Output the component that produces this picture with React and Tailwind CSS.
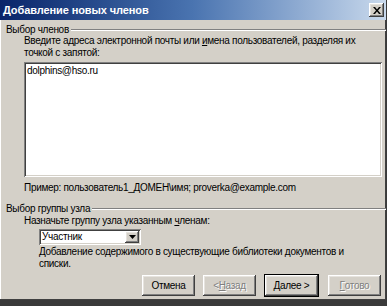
/*
 * wizard dialog - add new members to a site (classic windows look)
 */
const raised = 'shadow-[inset_-1px_-1px_#404040,inset_1px_1px_#ffffff,inset_-2px_-2px_#808080,inset_2px_2px_#e6e3de]';
const sunken = 'shadow-[inset_1px_1px_#808080,inset_-1px_-1px_#ffffff,inset_2px_2px_#404040,inset_-2px_-2px_#d4d0c8]';

function GroupHeader({ children }) {
  return (
    <div className="flex items-center h-[13px] pl-[6px]">
      <span className="whitespace-nowrap pr-[2px]">{children}</span>
      <div className="flex-1 border-t border-[#808080] border-b border-b-white mt-[1px]" />
    </div>
  );
}

function Button({ children, primary, disabled }) {
  return (
    <button
      type="button"
      className={`w-[53px] h-[21px] flex items-center justify-center bg-[#d4d0c8] ${raised} ${
        primary ? 'outline outline-1 outline-black' : ''
      } ${disabled ? 'text-[#808080] [text-shadow:1px_1px_#ffffff]' : 'text-black'}`}
    >
      {children}
    </button>
  );
}

export default function App() {
  return (
    <div className="w-[387px] h-[306px] bg-[#3a3a3a] text-[10px] tracking-[-0.3px] text-black font-['Liberation_Sans',Arial,sans-serif] overflow-hidden">
      <div className="w-[386px] h-[300px] bg-[#d4d0c8] flex flex-col shadow-[inset_-1px_-1px_#404040,inset_1px_1px_#ffffff]">
        {/* title bar */}
        <div className="h-[20px] flex items-center justify-between pl-[3px] pr-[2px] bg-gradient-to-r from-[#0a246a] via-[#4a74b0] to-[#c9d9ec]">
          <span className="text-white font-bold text-[11px] tracking-[-0.1px]">Добавление новых членов</span>
          <div className={`w-[15px] h-[14px] flex items-center justify-center bg-[#d4d0c8] ${raised}`}>
            <svg width="8" height="7" viewBox="0 0 8 7">
              <path d="M0 0h2l2 2.5L6 0h2L5 3.5 8 7H6L4 4.5 2 7H0l3-3.5z" fill="#000" />
            </svg>
          </div>
        </div>

        <div className="pt-[3px]">
          <GroupHeader>Выбор членов</GroupHeader>
          <div className="pl-[24px] pr-[4px] leading-[12px] mt-[-1px]">
            <p>
              Введите адреса электронной почты или <span className="underline">и</span>мена пользователей, разделяя их
              <br />
              точкой с запятой:
            </p>
            <div className={`mt-[3px] h-[115px] bg-white px-[3px] py-[3px] ${sunken}`}>
              dolphins@hso.ru
            </div>
            <p className="mt-[5px]">Пример: пользователь1_ДОМЕН{'\\'}имя; proverka@example.com</p>
          </div>

          <div className="mt-[8px]">
            <GroupHeader>Выбор группы узла</GroupHeader>
          </div>
          <div className="pl-[24px] leading-[12px]">
            <p>
              Назначьте группу узла указанным <span className="underline">ч</span>ленам:
            </p>
            <div className="pl-[15px]">
              <div className={`mt-[2px] w-[102px] h-[16px] bg-white flex items-center pl-[3px] ${sunken}`}>
                <span className="flex-1">Участник</span>
                <div className={`w-[14px] h-[12px] mr-[2px] bg-[#d4d0c8] flex items-center justify-center ${raised}`}>
                  <svg width="7" height="4" viewBox="0 0 7 4">
                    <path d="M0 0h7L3.5 4z" fill="#000" />
                  </svg>
                </div>
              </div>
              <p className="mt-[1px] pr-[20px]">
                Добавление содержимого в существующие библиотеки документов и
                <br />
                списки.
              </p>
            </div>
          </div>
        </div>

        {/* wizard buttons */}
        <div className="mt-[5px] flex pl-[142px] gap-[8px]">
          <Button>Отмена</Button>
          <Button disabled>&lt; <span className="underline">Н</span>азад</Button>
          <div className="ml-[1px]">
            <Button primary><span className="underline">Д</span>алее &gt;</Button>
          </div>
          <div className="ml-[2px]">
            <Button disabled><span className="underline">Г</span>отово</Button>
          </div>
        </div>
      </div>
    </div>
  );
}
